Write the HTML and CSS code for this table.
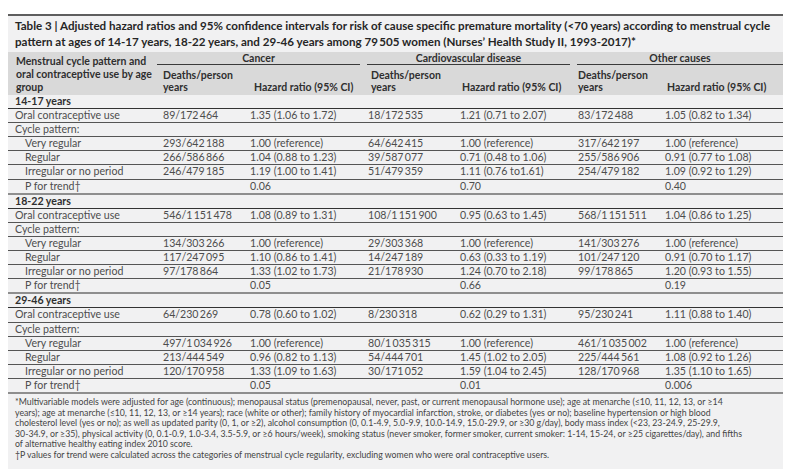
FILE: index.html
```html
<!DOCTYPE html>
<html lang="en">
<head>
<meta charset="utf-8">
<title>Table 3</title>
<link rel="stylesheet" href="styles.css">
</head>
<body>
<div class="tbl-wrap">
  <div class="title">Table 3 | Adjusted hazard ratios and 95% confidence intervals for risk of cause specific premature mortality (&lt;70 years) according to menstrual cycle<br>pattern at ages of 14-17 years, 18-22 years, and 29-46 years among 79&thinsp;505 women (Nurses’ Health Study II, 1993-2017)*</div>
  <table class="data">
    <colgroup>
      <col class="c-label">
      <col class="c-deaths">
      <col class="c-hr">
      <col class="c-deaths2">
      <col class="c-hr">
      <col class="c-deaths">
      <col class="c-hr-last">
    </colgroup>
    <thead>
      <tr class="h1">
        <th rowspan="2" class="corner">Menstrual cycle pattern and oral contraceptive use by age group</th>
        <th colspan="2" class="grp"><div class="grp-in first">Cancer</div></th>
        <th colspan="2" class="grp"><div class="grp-in">Cardiovascular disease</div></th>
        <th colspan="2" class="grp"><div class="grp-in last">Other causes</div></th>
      </tr>
      <tr class="h2">
        <th>Deaths/person years</th>
        <th class="hr hr-first">Hazard ratio (95% CI)</th>
        <th class="d2">Deaths/person years</th>
        <th class="hr">Hazard ratio (95% CI)</th>
        <th>Deaths/person years</th>
        <th class="hr">Hazard ratio (95% CI)</th>
      </tr>
    </thead>
    <tbody>
      <tr class="sec"><td colspan="7">14-17 years</td></tr>
      <tr><td>Oral contraceptive use</td><td>89/172&thinsp;464</td><td>1.35 (1.06 to 1.72)</td><td>18/172&thinsp;535</td><td>1.21 (0.71 to 2.07)</td><td>83/172&thinsp;488</td><td>1.05 (0.82 to 1.34)</td></tr>
      <tr><td>Cycle pattern:</td><td></td><td></td><td></td><td></td><td></td><td></td></tr>
      <tr><td class="ind">Very regular</td><td>293/642&thinsp;188</td><td>1.00 (reference)</td><td>64/642&thinsp;415</td><td>1.00 (reference)</td><td>317/642&thinsp;197</td><td>1.00 (reference)</td></tr>
      <tr><td class="ind">Regular</td><td>266/586&thinsp;866</td><td>1.04 (0.88 to 1.23)</td><td>39/587&thinsp;077</td><td>0.71 (0.48 to 1.06)</td><td>255/586&thinsp;906</td><td>0.91 (0.77 to 1.08)</td></tr>
      <tr><td class="ind">Irregular or no period</td><td>246/479&thinsp;185</td><td>1.19 (1.00 to 1.41)</td><td>51/479&thinsp;359</td><td>1.11 (0.76 to1.61)</td><td>254/479&thinsp;182</td><td>1.09 (0.92 to 1.29)</td></tr>
      <tr class="trend"><td class="ind">P for trend†</td><td></td><td>0.06</td><td></td><td>0.70</td><td></td><td>0.40</td></tr>

      <tr class="sec"><td colspan="7">18-22 years</td></tr>
      <tr><td>Oral contraceptive use</td><td>546/1&thinsp;151&thinsp;478</td><td>1.08 (0.89 to 1.31)</td><td>108/1&thinsp;151&thinsp;900</td><td>0.95 (0.63 to 1.45)</td><td>568/1&thinsp;151&thinsp;511</td><td>1.04 (0.86 to 1.25)</td></tr>
      <tr><td>Cycle pattern:</td><td></td><td></td><td></td><td></td><td></td><td></td></tr>
      <tr><td class="ind">Very regular</td><td>134/303&thinsp;266</td><td>1.00 (reference)</td><td>29/303&thinsp;368</td><td>1.00 (reference)</td><td>141/303&thinsp;276</td><td>1.00 (reference)</td></tr>
      <tr><td class="ind">Regular</td><td>117/247&thinsp;095</td><td>1.10 (0.86 to 1.41)</td><td>14/247&thinsp;189</td><td>0.63 (0.33 to 1.19)</td><td>101/247&thinsp;120</td><td>0.91 (0.70 to 1.17)</td></tr>
      <tr><td class="ind">Irregular or no period</td><td>97/178&thinsp;864</td><td>1.33 (1.02 to 1.73)</td><td>21/178&thinsp;930</td><td>1.24 (0.70 to 2.18)</td><td>99/178&thinsp;865</td><td>1.20 (0.93 to 1.55)</td></tr>
      <tr class="trend"><td class="ind">P for trend†</td><td></td><td>0.05</td><td></td><td>0.66</td><td></td><td>0.19</td></tr>

      <tr class="sec"><td colspan="7">29-46 years</td></tr>
      <tr><td>Oral contraceptive use</td><td>64/230&thinsp;269</td><td>0.78 (0.60 to 1.02)</td><td>8/230&thinsp;318</td><td>0.62 (0.29 to 1.31)</td><td>95/230&thinsp;241</td><td>1.11 (0.88 to 1.40)</td></tr>
      <tr><td>Cycle pattern:</td><td></td><td></td><td></td><td></td><td></td><td></td></tr>
      <tr><td class="ind">Very regular</td><td>497/1&thinsp;034&thinsp;926</td><td>1.00 (reference)</td><td>80/1&thinsp;035&thinsp;315</td><td>1.00 (reference)</td><td>461/1&thinsp;035&thinsp;002</td><td>1.00 (reference)</td></tr>
      <tr><td class="ind">Regular</td><td>213/444&thinsp;549</td><td>0.96 (0.82 to 1.13)</td><td>54/444&thinsp;701</td><td>1.45 (1.02 to 2.05)</td><td>225/444&thinsp;561</td><td>1.08 (0.92 to 1.26)</td></tr>
      <tr><td class="ind">Irregular or no period</td><td>120/170&thinsp;958</td><td>1.33 (1.09 to 1.63)</td><td>30/171&thinsp;052</td><td>1.59 (1.04 to 2.45)</td><td>128/170&thinsp;968</td><td>1.35 (1.10 to 1.65)</td></tr>
      <tr class="trend"><td class="ind">P for trend†</td><td></td><td>0.05</td><td></td><td>0.01</td><td></td><td>0.006</td></tr>
    </tbody>
  </table>
  <div class="notes">
    <div class="note-line">*Multivariable models were adjusted for age (continuous); menopausal status (premenopausal, never, past, or current menopausal hormone use); age at menarche (≤10, 11, 12, 13, or ≥14</div>
    <div class="note-line">years); age at menarche (≤10, 11, 12, 13, or ≥14 years); race (white or other); family history of myocardial infarction, stroke, or diabetes (yes or no); baseline hypertension or high blood</div>
    <div class="note-line">cholesterol level (yes or no); as well as updated parity (0, 1, or ≥2), alcohol consumption (0, 0.1-4.9, 5.0-9.9, 10.0-14.9, 15.0-29.9, or ≥30 g/day), body mass index (&lt;23, 23-24.9, 25-29.9,</div>
    <div class="note-line">30-34.9, or ≥35), physical activity (0, 0.1-0.9, 1.0-3.4, 3.5-5.9, or ≥6 hours/week), smoking status (never smoker, former smoker, current smoker: 1-14, 15-24, or ≥25 cigarettes/day), and fifths</div>
    <div class="note-line">of alternative healthy eating index 2010 score.</div>
    <div class="note-line">†P values for trend were calculated across the categories of menstrual cycle regularity, excluding women who were oral contraceptive users.</div>
  </div>
</div>
</body>
</html>
```

FILE: styles.css
```css
html, body {
  margin: 0;
  padding: 0;
  background: #ffffff;
}

body {
  font-family: Lato, "Open Sans", "DejaVu Sans", sans-serif;
  color: #4a4a4a;
}

.tbl-wrap {
  margin: 14px 0 0 8px;
  width: 775px;
  min-height: 455px;
  background: #f1f1f2;
}

.title {
  border-top: 2px solid #5e5e5e;
  padding: 2px 7px 2px;
  font-size: 11.6px;
  line-height: 16px;
  font-weight: 700;
  color: #262626;
  white-space: nowrap;
}

.data {
  width: 775px;
  border-collapse: collapse;
  table-layout: fixed;
  font-size: 10.6px;
}

.c-label { width: 149px; }
.c-deaths { width: 87px; }
.c-deaths2 { width: 92px; }
.c-hr { width: 118px; }
.c-hr-last { width: 124px; }

thead th {
  background: #d9d9d9;
  color: #2f2f2f;
  font-weight: 700;
  font-size: 10.5px;
  text-align: left;
  padding: 0 4px 0 6px;
  line-height: 12px;
}

thead .corner {
  vertical-align: top;
  padding: 3px 0 0 8px;
  line-height: 13px;
}

thead .h1 .grp {
  padding: 1px 0 0;
  text-align: center;
  vertical-align: top;
}

.grp-in {
  line-height: 11px;
  border-bottom: 1px solid #3a3a3a;
  margin: 0 2px 0 5px;
  padding-bottom: 0;
}

.grp-in.first {
  margin-left: 0;
}

.grp-in.last {
  margin-right: 0;
}

thead .h2 th {
  vertical-align: bottom;
  padding-bottom: 2px;
  padding-top: 4px;
}

thead .h2 th.hr {
  padding-left: 8px;
}

thead .h2 th.hr-first {
  padding-left: 10px;
}

thead .h2 th.d2 {
  padding-left: 9px;
}

tbody td {
  padding: 0 4px 0 6px;
  line-height: 13.1px;
  border-bottom: 1px solid #555555;
  white-space: nowrap;
  font-weight: 400;
  color: #4d4d4d;
}

tbody td:first-child {
  padding-left: 7px;
}

tbody td.ind {
  padding-left: 17px;
}

tbody tr.sec td {
  font-weight: 700;
  color: #2f2f2f;
  border-bottom: 1px solid #333333;
  padding-left: 7px;
}

tbody tr.trend td {
  border-bottom: 2px solid #8e8e8e;
}

.notes {
  padding: 3px 7px 6px;
  font-size: 8.75px;
  line-height: 10.6px;
  color: #444444;
}

.note-line {
  white-space: nowrap;
}
```
